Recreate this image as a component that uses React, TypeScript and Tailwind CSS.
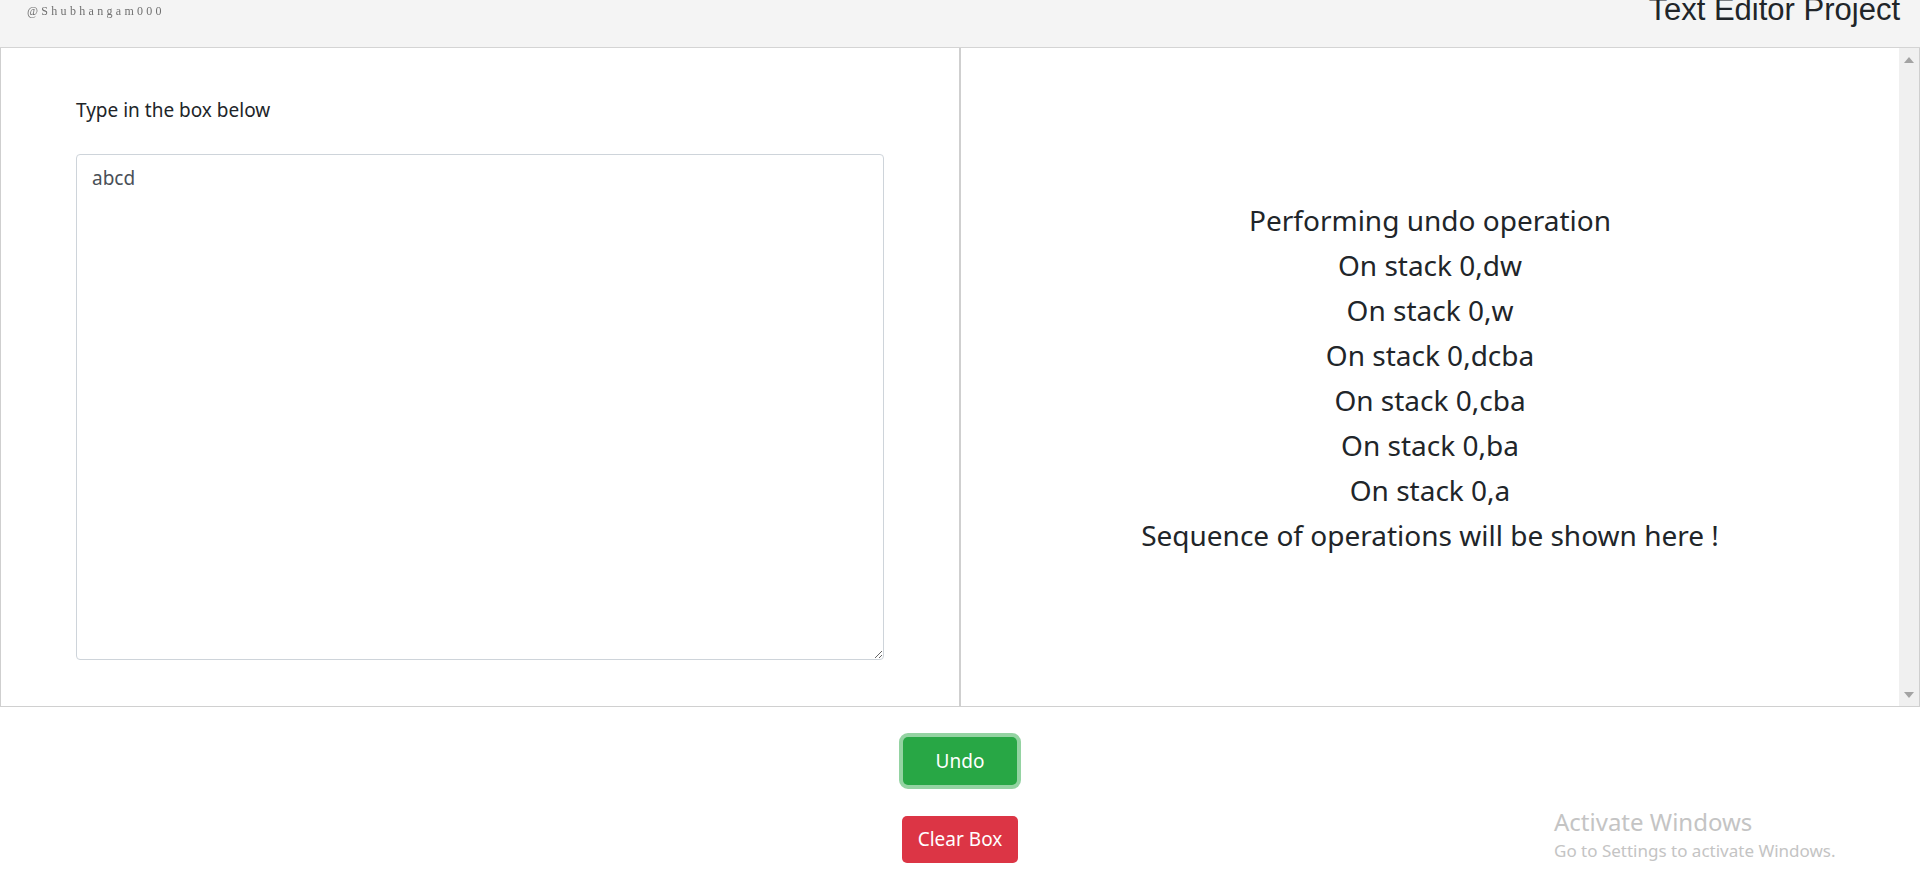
import React from "react";

const lines = [
  "Performing undo operation",
  "On stack 0,dw",
  "On stack 0,w",
  "On stack 0,dcba",
  "On stack 0,cba",
  "On stack 0,ba",
  "On stack 0,a",
  "Sequence of operations will be shown here !",
];

export default function App() {
  return (
    <div className="w-[1920px] h-[895px] bg-white overflow-hidden relative font-['Noto_Sans',sans-serif] text-[#212529]">
      {/* Header */}
      <header className="h-[48px] bg-[#f4f4f4] border-b border-[#d4d4d4] flex justify-between items-start overflow-hidden">
        <div className="pl-[27px] pt-[2px] text-[12px] tracking-[3.3px] text-[#707070] blur-[0.7px] font-['Liberation_Serif',serif]">
          @Shubhangam000
        </div>
        <h1 className="mt-[-6px] pr-[20px] text-[31px] leading-[31px] font-['Liberation_Sans',sans-serif] text-[#212529]">
          Text Editor Project
        </h1>
      </header>

      {/* Panels */}
      <main className="flex h-[659px] border-b border-[#d0d0d0]">
        <section className="w-[960px] border-l border-r border-[#cfcfcf] pl-[75px] pt-[48px]">
          <p className="text-[19px] leading-[28px] text-[#212529]">Type in the box below</p>
          <textarea
            className="mt-[30px] block w-[808px] h-[506px] border border-[#ced4da] rounded-[4px] pl-[15px] pr-[15px] pt-[10px] text-[19px] leading-[27px] text-[#495057] outline-none resize-y bg-white"
            defaultValue="abcd"
          />
        </section>
        <section className="flex-1 flex border-l border-[#cfcfcf] border-r">
          <div className="flex-1 flex flex-col items-center justify-center pt-[2px]">
            {lines.map((l) => (
              <div key={l} className="text-[28px] leading-[45px] text-[#212529]">
                {l}
              </div>
            ))}
          </div>
          <div className="w-[20px] bg-[#f0f0f0] flex flex-col justify-between items-center pt-[9px] pb-[8px]">
            <svg width="10" height="6" viewBox="0 0 10 6">
              <polygon points="5,0 10,6 0,6" fill="#a3a3a3" />
            </svg>
            <svg width="10" height="6" viewBox="0 0 10 6">
              <polygon points="0,0 10,0 5,6" fill="#a3a3a3" />
            </svg>
          </div>
        </section>
      </main>

      {/* Buttons */}
      <div className="flex flex-col items-center pt-[30px]">
        <button className="w-[114px] h-[48px] bg-[#28a745] text-white text-[19px] rounded-[5px] ring-4 ring-[#94d3a2]">
          Undo
        </button>
        <button className="mt-[31px] w-[116px] h-[47px] bg-[#dc3545] text-white text-[19px] rounded-[5px]">
          Clear Box
        </button>
      </div>

      {/* Windows watermark */}
      <div className="absolute left-[1554px] top-[805px] text-[#c4c4c4]">
        <div className="text-[24px] leading-[33px]">Activate Windows</div>
        <div className="text-[17px] leading-[26px] mt-[0px]">Go to Settings to activate Windows.</div>
      </div>
    </div>
  );
}
